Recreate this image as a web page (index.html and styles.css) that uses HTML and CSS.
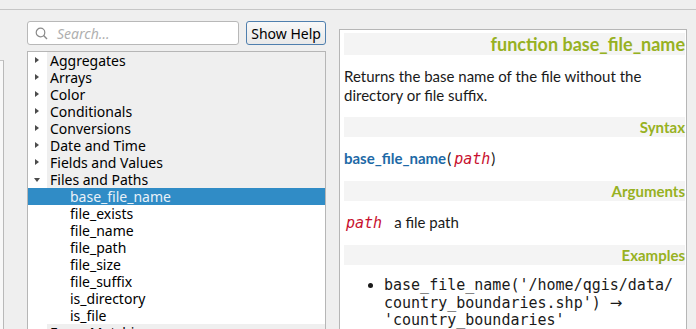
FILE: index.html
```html
<!DOCTYPE html>
<html lang="en">
<head>
  <meta charset="UTF-8" />
  <title>Expression functions</title>
  <link rel="stylesheet" href="styles.css">
</head>
<body>
  <div class="topbar"></div>
  <div class="main">
    <div class="side-frame"></div>

    <div class="left-col">
      <div class="search-row">
        <div class="search">
          <svg class="search-icon" width="13" height="13" viewBox="0 0 13 13">
            <circle cx="5.5" cy="5.5" r="4.3" fill="none" stroke="#8a8a8a" stroke-width="1.2"/>
            <line x1="8.6" y1="8.6" x2="12" y2="12" stroke="#8a8a8a" stroke-width="1.4"/>
          </svg>
          <span class="placeholder">Search…</span>
        </div>
        <button class="help-btn">Show Help</button>
      </div>

      <div class="tree">
        <div class="row group"><span class="arrow right"></span><span class="label">Aggregates</span></div>
        <div class="row group"><span class="arrow right"></span><span class="label">Arrays</span></div>
        <div class="row group"><span class="arrow right"></span><span class="label">Color</span></div>
        <div class="row group"><span class="arrow right"></span><span class="label">Conditionals</span></div>
        <div class="row group"><span class="arrow right"></span><span class="label">Conversions</span></div>
        <div class="row group"><span class="arrow right"></span><span class="label">Date and Time</span></div>
        <div class="row group"><span class="arrow right"></span><span class="label">Fields and Values</span></div>
        <div class="row group"><span class="arrow down"></span><span class="label">Files and Paths</span></div>
        <div class="row child selected"><span class="label">base_file_name</span></div>
        <div class="row child"><span class="label">file_exists</span></div>
        <div class="row child"><span class="label">file_name</span></div>
        <div class="row child"><span class="label">file_path</span></div>
        <div class="row child"><span class="label">file_size</span></div>
        <div class="row child"><span class="label">file_suffix</span></div>
        <div class="row child"><span class="label">is_directory</span></div>
        <div class="row child"><span class="label">is_file</span></div>
        <div class="row group"><span class="arrow right"></span><span class="label">Fuzzy Matching</span></div>
      </div>
    </div>

    <div class="help">
      <h3 class="help-head big">function base_file_name</h3>
      <p class="help-text">Returns the base name of the file without the directory or file suffix.</p>

      <h4 class="help-head">Syntax</h4>
      <p class="help-text"><span class="fn">base_file_name</span><span class="paren">(</span><span class="arg">path</span><span class="paren">)</span></p>

      <h4 class="help-head">Arguments</h4>
      <p class="help-text"><span class="arg">path</span><span class="arg-desc">a file path</span></p>

      <h4 class="help-head">Examples</h4>
      <ul class="examples">
        <li>base_file_name('/home/qgis/data/ country_boundaries.shp') <span class="yields">→</span> 'country_boundaries'</li>
      </ul>
    </div>
  </div>
</body>
</html>
```

FILE: styles.css
```css
/* Window background */
body {
  margin: 0;
  background: #efefef;
  font-family: "Noto Sans", sans-serif;
  font-size: 14px;
  color: #000;
  height: 329px;
  overflow: hidden;
}

.topbar {
  height: 9px;
  border-bottom: 1px solid #c6c6c6;
}

.main {
  display: flex;
  height: 319px;
}

/* Edge of the panel to the left */
.side-frame {
  width: 3px;
  margin-top: 50px;
  background: #f8f8f8;
  border-top: 1px solid #c4c4c4;
  border-right: 1px solid #b9b9b9;
}

/* Function list column */
.left-col {
  width: 299px;
  margin-left: 23px;
  padding-top: 11px;
  display: flex;
  flex-direction: column;
}

.search-row {
  display: flex;
  gap: 7px;
  height: 24px;
}

.search {
  width: 209px;
  border: 1px solid #b8b8b8;
  border-radius: 3px;
  background: #fff;
  display: flex;
  align-items: center;
  padding-left: 7px;
  gap: 9px;
}

.placeholder {
  font-style: italic;
  color: #b0b0b0;
}

.help-btn {
  width: 82px;
  height: 24px;
  padding: 0;
  border: 1px solid #4f7fae;
  border-radius: 3px;
  background: linear-gradient(#f8f8f8, #e9e9e9);
  font-family: "Noto Sans", sans-serif;
  font-size: 14px;
  color: #000;
}

.tree {
  margin-top: 6px;
  flex: 1;
  background: #fff;
  border: 1px solid #b6b6b6;
  border-bottom: none;
  overflow: hidden;
}

.row {
  height: 17px;
  line-height: 17px;
  display: flex;
  align-items: flex-start;
  white-space: nowrap;
}

/* group rows are shaded right of the expander column */
.row.group {
  background: linear-gradient(to right, #fff 19px, #efefef 19px);
}

.row.group .label {
  padding-left: 3px;
}

.row.child {
  padding-left: 42px;
}

.row.selected {
  background: #308cc6;
  color: #e8f1f8;
}

.arrow {
  width: 19px;
  height: 17px;
  position: relative;
}

.arrow::after {
  content: "";
  position: absolute;
  width: 0;
  height: 0;
}

.arrow.right::after {
  left: 7px;
  top: 5px;
  border-top: 3.5px solid transparent;
  border-bottom: 3.5px solid transparent;
  border-left: 4px solid #4c4c4c;
}

.arrow.down::after {
  left: 6px;
  top: 7px;
  border-left: 3.5px solid transparent;
  border-right: 3.5px solid transparent;
  border-top: 4px solid #4c4c4c;
}

/* Help panel */
.help {
  margin-left: 13px;
  margin-top: 19px;
  width: 341px;
  background: #fff;
  border: 1px solid #b6b6b6;
  border-bottom: none;
  padding: 3px 1px 0 4px;
  font-family: Lato, sans-serif;
  font-size: 15px;
  color: #1a1a1a;
  overflow: hidden;
}

.help-head {
  margin: 0;
  background: #f4f4f4;
  color: #97b122;
  font-weight: bold;
  text-align: right;
  font-size: 15px;
  line-height: 20px;
  height: 20px;
}

.help-head.big {
  font-size: 18px;
  line-height: 22px;
  height: 22px;
}

.help-text {
  margin: 12px 0;
  line-height: 19px;
}

.fn {
  color: #1d69a6;
  font-weight: bold;
}

.paren {
  padding: 0 1px;
}

.arg {
  font-family: "DejaVu Sans Mono", monospace;
  font-style: italic;
  color: #c8102e;
  padding-left: 2px;
}

.arg-desc {
  margin-left: 12px;
}

.examples {
  margin: 12px 0 0;
  padding-left: 40px;
  font-family: "DejaVu Sans Mono", monospace;
  font-size: 15px;
  line-height: 17.5px;
  color: #1a1a1a;
}

.yields {
  font-family: "DejaVu Sans", sans-serif;
}
```
